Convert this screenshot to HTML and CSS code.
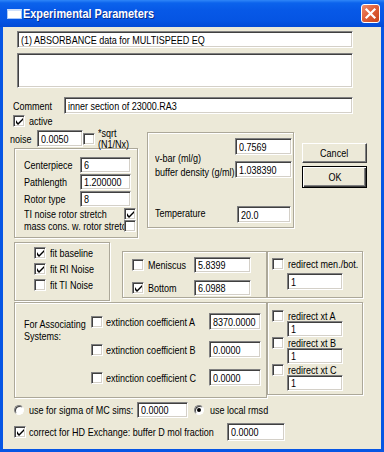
FILE: index.html
```html
<!DOCTYPE html>
<html lang="en">
<head>
  <meta charset="UTF-8">
  <title>Experimental Parameters</title>
  <link rel="stylesheet" href="styles.css">
</head>
<body>
<div class="window">
  <div class="titlebar">
    <span class="app-icon"></span>
    <span class="title">Experimental Parameters</span>
    <span class="close-btn">
      <svg width="17" height="17" viewBox="0 0 17 17"><path d="M4.5 4.5l8 8M12.5 4.5l-8 8" stroke="#fff" stroke-width="2.2" stroke-linecap="square"/></svg>
    </span>
  </div>

  <div class="client">
    <div class="field run-name"><span>(1) ABSORBANCE data for MULTISPEED EQ</span></div>
    <div class="field memo"></div>

    <div class="comment-row">
      <span class="comment-label">Comment</span>
      <div class="field comment-field"><span>inner section of 23000.RA3</span></div>
    </div>

    <div class="active-row">
      <i class="cb on"><svg width="7" height="7" viewBox="0 0 7 7"><path d="M0 2v3l2 2 5-5V0L2 5z"/></svg></i>
      <span class="cb-text">active</span>
    </div>

    <div class="upper">
      <div class="left-col">
        <div class="noise-row">
          <span class="noise-label">noise</span>
          <div class="field noise-field"><span>0.0050</span></div>
          <i class="cb"></i>
          <span class="sqrt">*sqrt<br>(N1/Nx)</span>
        </div>
        <div class="group rotor-box">
          <div class="prow"><span class="plabel">Centerpiece</span><div class="field pfield"><span>6</span></div></div>
          <div class="prow"><span class="plabel">Pathlength</span><div class="field pfield"><span>1.200000</span></div></div>
          <div class="prow"><span class="plabel">Rotor type</span><div class="field pfield"><span>8</span></div></div>
          <div class="srow">
            <span class="slabel">TI noise rotor stretch</span>
            <i class="cb on"><svg width="7" height="7" viewBox="0 0 7 7"><path d="M0 2v3l2 2 5-5V0L2 5z"/></svg></i>
          </div>
          <div class="srow">
            <span class="slabel">mass cons. w. rotor stretch</span>
            <i class="cb"></i>
          </div>
        </div>
      </div>

      <div class="group density-box">
        <div class="drow vbar"><span class="dlabel">v-bar (ml/g)</span><div class="field dfield"><span>0.7569</span></div></div>
        <div class="drow dens"><span class="dlabel">buffer density (g/ml)</span><div class="field dfield"><span>1.038390</span></div></div>
        <div class="drow temp"><span class="dlabel">Temperature</span><div class="field dfield"><span>20.0</span></div></div>
      </div>

      <div class="buttons">
        <div class="btn"><span>Cancel</span></div>
        <div class="btn default"><span>OK</span></div>
      </div>
    </div>

    <div class="fit-row">
      <div class="group fit-box">
        <div class="crow"><i class="cb on"><svg width="7" height="7" viewBox="0 0 7 7"><path d="M0 2v3l2 2 5-5V0L2 5z"/></svg></i><span>fit baseline</span></div>
        <div class="crow"><i class="cb on"><svg width="7" height="7" viewBox="0 0 7 7"><path d="M0 2v3l2 2 5-5V0L2 5z"/></svg></i><span>fit RI Noise</span></div>
        <div class="crow"><i class="cb"></i><span>fit TI Noise</span></div>
      </div>
      <div class="group men-box">
        <div class="mrow"><i class="cb"></i><span class="mlabel">Meniscus</span><div class="field mfield"><span>5.8399</span></div></div>
        <div class="mrow"><i class="cb on"><svg width="7" height="7" viewBox="0 0 7 7"><path d="M0 2v3l2 2 5-5V0L2 5z"/></svg></i><span class="mlabel">Bottom</span><div class="field mfield"><span>6.0988</span></div></div>
      </div>
      <div class="group redirect-box">
        <div class="crow"><i class="cb"></i><span>redirect men./bot.</span></div>
        <div class="field rfield"><span>1</span></div>
      </div>
    </div>

    <div class="assoc-row">
      <div class="group assoc-box">
        <span class="assoc-text">For Associating<br>Systems:</span>
        <div class="ext-list">
          <div class="erow"><i class="cb"></i><span class="elabel">extinction coefficient A</span><div class="field efield"><span>8370.0000</span></div></div>
          <div class="erow"><i class="cb"></i><span class="elabel">extinction coefficient B</span><div class="field efield"><span>0.0000</span></div></div>
          <div class="erow"><i class="cb"></i><span class="elabel">extinction coefficient C</span><div class="field efield"><span>0.0000</span></div></div>
        </div>
      </div>
      <div class="group xt-box">
        <div class="crow xt"><i class="cb"></i><span>redirect xt A</span></div>
        <div class="field xt-field"><span>1</span></div>
        <div class="crow xt"><i class="cb"></i><span>redirect xt B</span></div>
        <div class="field xt-field"><span>1</span></div>
        <div class="crow xt"><i class="cb"></i><span>redirect xt C</span></div>
        <div class="field xt-field"><span>1</span></div>
      </div>
    </div>

    <div class="sigma-row">
      <i class="rb"></i>
      <span class="sigma-label">use for sigma of MC sims:</span>
      <div class="field sigma-field"><span>0.0000</span></div>
      <i class="rb on"></i>
      <span class="rmsd-label">use local rmsd</span>
    </div>

    <div class="hd-row">
      <i class="cb on"><svg width="7" height="7" viewBox="0 0 7 7"><path d="M0 2v3l2 2 5-5V0L2 5z"/></svg></i>
      <span class="hd-label">correct for HD Exchange: buffer D mol fraction</span>
      <div class="field hd-field"><span>0.0000</span></div>
    </div>
  </div>
</div>
</body>
</html>
```

FILE: styles.css
```css
* {
  box-sizing: border-box;
}

body {
  margin: 0;
  font-family: "Liberation Sans", Arial, sans-serif;
  font-size: 11px;
  color: #000;
}

.window {
  width: 384px;
  height: 452px;
  display: flex;
  flex-direction: column;
  background: #0756e4;
}

/* title bar */
.titlebar {
  height: 27px;
  flex: none;
  display: flex;
  align-items: center;
  padding: 0 4px 0 7px;
  background: linear-gradient(#2f86f8 0, #0b63ec 3px, #0759e7 10px, #0554e3 21px, #034bd6 27px);
  color: #fff;
}

.app-icon {
  width: 15px;
  height: 10px;
  background: #fff;
  border: 1px solid #a9c6f6;
  border-top: 2px solid #cfe0fb;
}

.title {
  margin-left: 1px;
  font-weight: bold;
  font-size: 13px;
  text-shadow: 1px 1px 0 #0a2c8c;
  transform: scaleX(0.84);
  transform-origin: 0 50%;
  white-space: nowrap;
}

.close-btn {
  margin-left: auto;
  width: 19px;
  height: 19px;
  display: flex;
  align-items: center;
  justify-content: center;
  border: 1px solid #fff;
  border-radius: 3px;
  background: linear-gradient(135deg, #f08d6d 0, #e0603a 45%, #c8441c 100%);
}

.client {
  flex: 1;
  margin: 0 3px 3px;
  background: #ece9d8;
  overflow: hidden;
}

/* the dialog font is narrower than Arial */
.client span {
  display: inline-block;
  transform: scaleX(0.82);
  transform-origin: 0 50%;
  white-space: nowrap;
}

/* common controls */
.field {
  flex: none;
  display: flex;
  align-items: center;
  height: 17px;
  padding: 0 3px;
  background: #fff;
  border: 1px solid;
  border-color: #808080 #fff #fff #808080;
  box-shadow: inset 1px 1px 0 #404040, inset -1px -1px 0 #d4d0c8;
  overflow: hidden;
}

.cb {
  flex: none;
  width: 12px;
  height: 12px;
  display: flex;
  align-items: center;
  justify-content: center;
  background: #fff;
  border: 1px solid;
  border-color: #808080 #fff #fff #808080;
  box-shadow: inset 1px 1px 0 #404040, inset -1px -1px 0 #d4d0c8;
}

.rb {
  flex: none;
  width: 10px;
  height: 10px;
  border-radius: 50%;
  background: #fff;
  border: 1px solid;
  border-color: #808080 #fff #fff #808080;
  box-shadow: inset 1px 1px 0 #404040;
  display: flex;
  align-items: center;
  justify-content: center;
}

.rb.on::after {
  content: "";
  width: 4px;
  height: 4px;
  border-radius: 50%;
  background: #000;
}

.group {
  flex: none;
  border: 1px solid #aca899;
  box-shadow: inset 1px 1px 0 #fff, 1px 1px 0 #fff;
}

.btn {
  height: 20px;
  display: flex;
  align-items: center;
  justify-content: center;
  background: #ece9d8;
  border: 1px solid;
  border-color: #fff #404040 #404040 #fff;
  box-shadow: inset -1px -1px 0 #808080;
}

.btn span {
  transform-origin: 50% 50%;
}

.btn.default {
  margin-top: 3px;
  height: 22px;
  border: 1px solid #000;
  box-shadow: inset 1px 1px 0 #fff, inset -1px -1px 0 #404040, inset -2px -2px 0 #808080;
}

/* top fields */
.run-name {
  margin: 4px 0 0 14px;
  width: 336px;
}

.memo {
  margin: 5px 0 0 14px;
  width: 336px;
  height: 35px;
}

.comment-row {
  display: flex;
  align-items: center;
  margin-top: 9px;
  padding-left: 10px;
}

.comment-label {
  width: 51px;
  flex: none;
}

.comment-field {
  width: 289px;
}

.active-row {
  display: flex;
  align-items: center;
  height: 12px;
  margin-top: 1px;
  padding-left: 10px;
}

.cb-text {
  margin-left: 4px;
}

/* upper block */
.upper {
  display: flex;
  align-items: flex-start;
  margin-top: 3px;
}

.left-col {
  flex: none;
  width: 127px;
  margin-left: 7px;
}

.noise-row {
  display: flex;
  align-items: center;
  height: 17px;
}

.noise-label {
  width: 27px;
  flex: none;
}

.noise-field {
  width: 46px;
}

.client .sqrt {
  margin-left: 3px;
  line-height: 11px;
}

.rotor-box {
  width: 124px;
  height: 90px;
  margin: 1px 0 0 4px;
  padding: 8px 0 0 9px;
}

.prow {
  display: flex;
  align-items: center;
  height: 16px;
  margin-bottom: 1px;
}

.plabel {
  width: 56px;
  flex: none;
}

.pfield {
  width: 51px;
  height: 16px;
}

.srow {
  display: flex;
  align-items: center;
  height: 12px;
}

/* scaled by 0.82, so 122px shows as 100px */
.slabel {
  width: 122px;
  margin-right: -22px;
  flex: none;
  overflow: hidden;
}

.density-box {
  width: 147px;
  height: 96px;
  margin: 2px 0 0 10px;
  padding: 5px 0 0 7px;
}

.drow {
  display: flex;
  align-items: flex-start;
}

.dlabel {
  width: 80px;
  flex: none;
  line-height: 13px;
}

.dfield {
  width: 57px;
}

.vbar {
  height: 23px;
}

.vbar .dlabel {
  padding-top: 14px;
}

.dens {
  height: 45px;
}

.dens .dlabel {
  padding-top: 5px;
}

.temp {
  height: 17px;
}

.temp .dlabel {
  padding-top: 1px;
}

.temp .dfield {
  width: 54px;
  margin-left: 2px;
}

.buttons {
  flex: none;
  width: 65px;
  margin: 13px 0 0 8px;
}

/* fit row */
.fit-row {
  display: flex;
  align-items: flex-start;
  margin-top: 4px;
}

.crow {
  display: flex;
  align-items: center;
  height: 12px;
}

.crow span {
  margin-left: 4px;
}

.fit-box {
  width: 96px;
  height: 59px;
  margin-left: 11px;
  padding: 4px 0 0 19px;
}

.fit-box .crow {
  margin-bottom: 4px;
}

.men-box {
  width: 145px;
  height: 47px;
  margin: 9px 0 0 12px;
  padding: 5px 0 0 9px;
}

.mrow {
  display: flex;
  align-items: center;
  height: 16px;
  margin-bottom: 7px;
}

.mlabel {
  width: 46px;
  flex: none;
  margin-left: 4px;
}

.mfield {
  width: 57px;
  height: 16px;
}

.redirect-box {
  width: 96px;
  height: 47px;
  margin-top: 9px;
  padding: 6px 0 0 4px;
}

.rfield {
  width: 56px;
  margin: 3px 0 0 15px;
}

/* associating block */
.assoc-row {
  display: flex;
  align-items: flex-start;
  margin-top: 1px;
}

.assoc-box {
  display: flex;
  width: 253px;
  height: 96px;
  margin-left: 11px;
  padding-left: 9px;
}

.assoc-text {
  width: 67px;
  flex: none;
  margin-top: 15px;
  line-height: 12px;
}

.ext-list {
  padding-top: 10px;
}

.erow {
  display: flex;
  align-items: center;
  height: 17px;
  margin-bottom: 11px;
}

.elabel {
  width: 103px;
  flex: none;
  margin-left: 3px;
}

.efield {
  width: 52px;
}

.xt-box {
  width: 96px;
  height: 93px;
  padding: 7px 0 0 4px;
}

.crow.xt {
  height: 11px;
}

.xt-field {
  width: 56px;
  height: 16px;
  margin-left: 15px;
}

/* bottom rows */
.sigma-row {
  display: flex;
  align-items: center;
  height: 16px;
  margin-top: 4px;
  padding-left: 11px;
}

.sigma-label {
  width: 108px;
  flex: none;
  margin-left: 5px;
}

.sigma-field {
  width: 51px;
  height: 16px;
}

.sigma-row .rb.on {
  margin-left: 6px;
}

.rmsd-label {
  margin-left: 6px;
}

.hd-row {
  display: flex;
  align-items: center;
  height: 18px;
  margin-top: 5px;
  padding-left: 11px;
}

.hd-label {
  width: 198px;
  flex: none;
  margin-left: 3px;
}

.hd-field {
  width: 58px;
  height: 18px;
}
```
